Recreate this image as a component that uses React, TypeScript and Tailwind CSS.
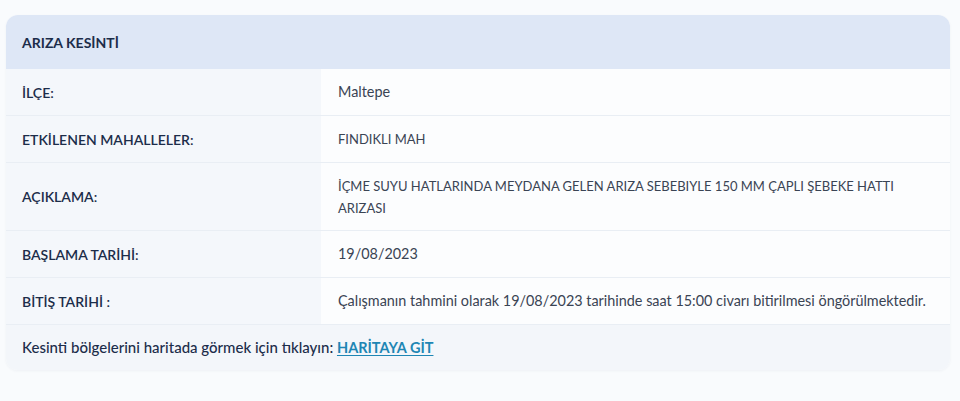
const rows: { label: string; value: string; tall?: boolean; caps?: boolean }[] = [
  { label: 'İLÇE:', value: 'Maltepe' },
  { label: 'ETKİLENEN MAHALLELER:', value: 'FINDIKLI MAH', caps: true },
  {
    label: 'AÇIKLAMA:',
    value: 'İÇME SUYU HATLARINDA MEYDANA GELEN ARIZA SEBEBIYLE 150 MM ÇAPLI ŞEBEKE HATTI ARIZASI',
    tall: true,
    caps: true,
  },
  { label: 'BAŞLAMA TARİHİ:', value: '19/08/2023' },
  {
    label: 'BİTİŞ TARİHİ :',
    value: 'Çalışmanın tahmini olarak 19/08/2023 tarihinde saat 15:00 civarı bitirilmesi öngörülmektedir.',
  },
]

export default function App() {
  return (
    <div
      className="min-h-[401px] w-full bg-[#f9fbfd] pt-[15px] pl-[6px] pr-[10px]"
      style={{ fontFamily: 'Lato, "Open Sans", sans-serif' }}
    >
      <div className="rounded-[12px] overflow-hidden bg-[#fcfdfe] shadow-[0_1px_3px_rgba(30,50,90,0.05)]">
        <div className="h-[54px] flex items-center px-4 bg-[#dee7f6] text-[14px] font-bold text-[#1c2d4a]">
          ARIZA KESİNTİ
        </div>
        {rows.map((r) => (
          <div key={r.label} className="flex border-b border-[#e9eef4]">
            <div
              className={`w-[315px] shrink-0 flex items-center pl-4 bg-[#f4f7fb] text-[14px] font-semibold text-[#1c2d4a] ${
                r.tall ? 'h-[67px]' : 'h-[46px]'
              }`}
            >
              {r.label}
            </div>
            <div
              className={`flex-1 flex items-center pl-[17px] pr-4 leading-[22px] text-[#3a4454] ${
                r.caps ? 'text-[13px]' : 'text-[14.4px]'
              }`}
            >
              {r.value}
            </div>
          </div>
        ))}
        <div className="h-[45px] flex items-center px-4 bg-[#f3f6fa] text-[15px] font-medium text-[#1c2d4a]">
          Kesinti bölgelerini haritada görmek için tıklayın:&nbsp;
          <a href="#" className="font-bold text-[14.5px] text-[#1e86b4] underline underline-offset-2">
            HARİTAYA GİT
          </a>
        </div>
      </div>
    </div>
  )
}
